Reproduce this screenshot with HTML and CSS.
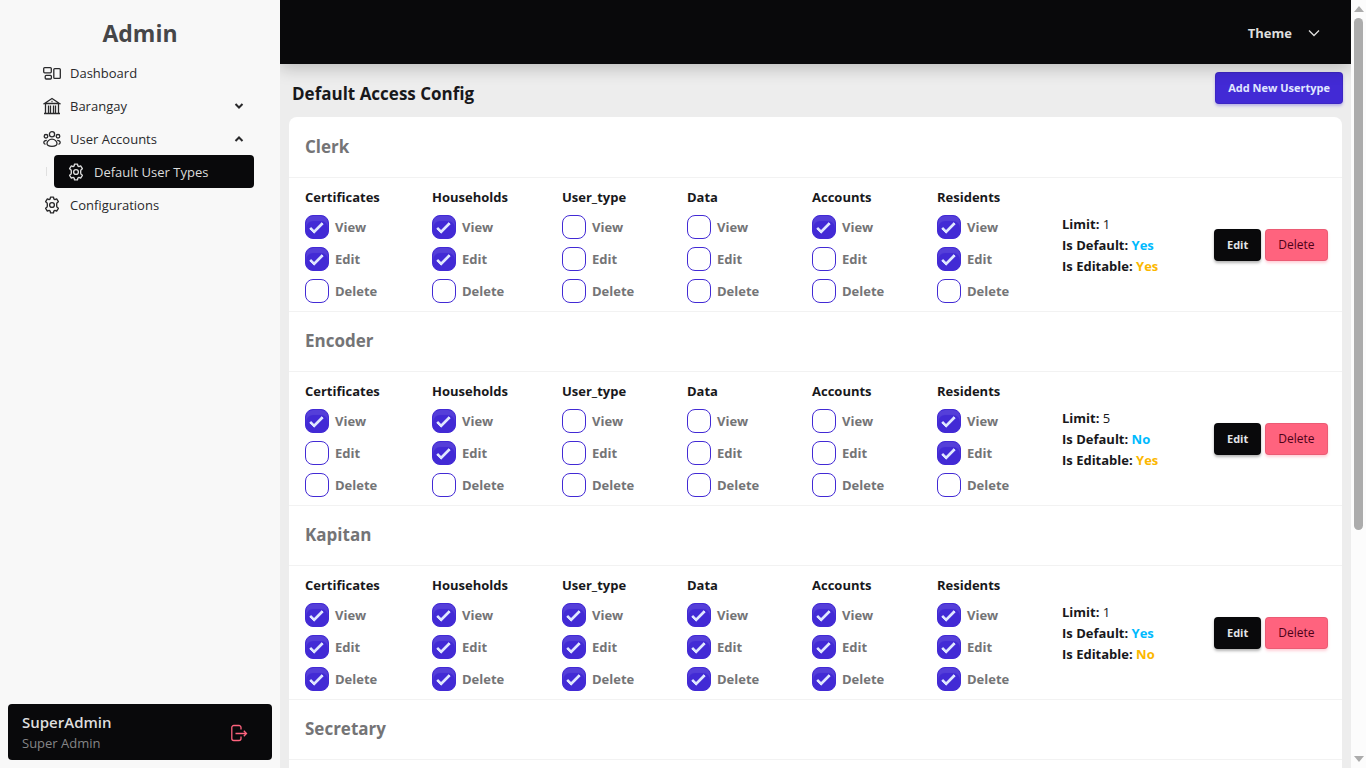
FILE: index.html
```html
<!DOCTYPE html>
<html lang="en">
<head>
<meta charset="utf-8">
<title>Default Access Config</title>
<link rel="stylesheet" href="styles.css">
</head>
<body>
<svg class="symbols" aria-hidden="true">
  <symbol id="gear" viewBox="0 0 24 24"><path d="M9.6 3.9 10 1.500h4l.4 2.400 1.500.9 2.300-.9 2.300 3.700-1.900 1.600c-.5.9-.5 4.700 0 5.600l1.900 1.600-2.300 3.700-2.300-.9-1.500.9-.4 2.400h-4l-.4-2.400-1.500-.9-2.300.9-2.300-3.700 1.900-1.600c.5-.9.5-4.700 0-5.600L3.500 7.600l2.300-3.700 2.300.9z"/><circle cx="12" cy="12" r="3.200"/></symbol>
  <symbol id="chevron" viewBox="0 0 10 10"><path d="m1.500 3 3.500 3.500L8.500 3"/></symbol>
</svg>
<div class="app">
  <aside class="sidebar">
    <h1 class="brand">Admin</h1>
    <nav class="menu">
      <a class="item" href="#"><svg class="icon" viewBox="0 0 18 18"><rect x=".7" y="3.600" width="7.600" height="5.200" rx="1"/><rect x="2.200" y="11.400" width="6.200" height="3.600" rx="1"/><rect x="10.800" y="4.600" width="6.500" height="9.800" rx="1"/></svg>Dashboard</a>
      <a class="item" href="#"><svg class="icon" viewBox="0 0 18 18"><path d="M1.500 6.500 9 1.500l7.500 5zM2.500 6.500V16M15.500 6.500V16M1 16.500h16M5.500 8.500V16M7.500 8.500V16M10.500 8.500V16M12.500 8.500V16M8.500 4.500h1"/></svg>Barangay<svg class="arrow" viewBox="0 0 10 10"><use href="#chevron"/></svg></a>
      <a class="item" href="#"><svg class="icon" viewBox="0 0 18 18"><circle cx="9" cy="4.200" r="2.600"/><circle cx="3" cy="6.300" r="1.800"/><circle cx="15" cy="6.300" r="1.800"/><path d="M9 9.200c-3 0-5 2.300-5 4.300 0 1.800 2 2.800 5 2.800s5-1 5-2.800c0-2-2-4.300-5-4.300zM3.800 10.300c-1.700 0-3 .9-3 2.300 0 .9.700 1.500 1.700 1.700M14.200 10.300c1.700 0 3 .9 3 2.300 0 .9-.7 1.500-1.700 1.700"/></svg>User Accounts<svg class="arrow up" viewBox="0 0 10 10"><use href="#chevron"/></svg></a>
      <div class="submenu">
        <a class="item active" href="#"><svg class="icon gear" viewBox="0 0 24 24"><use href="#gear"/></svg>Default User Types</a>
      </div>
      <a class="item" href="#"><svg class="icon gear" viewBox="0 0 24 24"><use href="#gear"/></svg>Configurations</a>
    </nav>
    <section class="profile">
      <div><strong class="name">SuperAdmin</strong><span class="role">Super Admin</span></div>
      <button class="logout" aria-label="Log out"><svg class="icon" viewBox="0 0 18 18"><path d="M11 5.500V3.500a2 2 0 0 0-2-2H3.800a2 2 0 0 0-2 2v11a2 2 0 0 0 2 2H9a2 2 0 0 0 2-2v-2M5.500 9.500h11M13.800 6.800l2.700 2.700-2.700 2.700"/></svg></button>
    </section>
  </aside>
  <main class="main">
    <header class="topbar">
      <button class="theme">Theme<svg class="caret" viewBox="0 0 12 12"><path d="m1 3.500 5 5 5-5"/></svg></button>
    </header>
    <div class="page">
      <div class="toolbar">
        <h2 class="title">Default Access Config</h2>
        <button class="btn primary">Add New Usertype</button>
      </div>
      <div class="card">
        <table class="access">
          <colgroup><col class="c-cert"><col class="c-house"><col class="c-mod"><col class="c-mod"><col class="c-mod"><col class="c-mod"><col class="c-info"><col class="c-act"></colgroup>
          <tbody id="rows"></tbody>
        </table>
      </div>
    </div>
  </main>
  <div class="scrollbar" aria-hidden="true">
    <svg class="tip" viewBox="0 0 10 6"><path d="M0 6h10L5 0z"/></svg>
    <div class="track"><div class="thumb"></div></div>
    <svg class="tip" viewBox="0 0 10 6"><path d="M0 0h10L5 6z"/></svg>
  </div>
</div>
<script src="app.js"></script>
</body>
</html>
```
FILE: styles.css
```css
* { box-sizing: border-box; }
body { margin: 0; font: 14px/20px "Open Sans", "Noto Sans", sans-serif; color: #18181b; background: #ededed; }
h1, h2, h3 { margin: 0; }
button { font: inherit; border: 0; cursor: pointer; }
a { color: inherit; text-decoration: none; }
svg { fill: none; stroke: currentColor; flex: none; }
.symbols { display: none; }
.app { display: grid; grid-template-columns: 280px 1fr 15px; height: 100vh; overflow: hidden; }

.sidebar { display: flex; flex-direction: column; padding: 8px; background: #f8f8f8; }
.brand { padding-top: 8px; font-size: 23px; line-height: 34px; font-weight: 700; text-align: center; color: #464648; }
.menu { display: flex; flex-direction: column; padding: 6px 18px 0 22px; }
.item { display: flex; align-items: center; gap: 9px; height: 33px; padding: 0 10px 0 13px; border-radius: 4px; font-size: 13px; color: #29292b; }
.icon { width: 18px; height: 18px; stroke-width: 1.3; }
.gear { stroke-width: 1.8; stroke-linejoin: round; }
.arrow { width: 10px; height: 10px; margin-left: auto; stroke-width: 2; }
.up { transform: rotate(180deg); }
.submenu { display: flex; align-items: center; gap: 7px; padding-left: 16px; }
.submenu::before { content: ""; width: 1px; height: 9px; background: #e0e0e0; }
.active { flex: 1; background: #09090b; color: #dcdcdc; }
.profile { display: flex; align-items: center; justify-content: space-between; height: 56px; margin-top: auto; padding: 2px 24px 0 14px; border-radius: 4px; background: #09090b; }
.name { display: block; font-size: 15px; line-height: 20px; font-weight: 600; color: #dedede; }
.role { display: block; font-size: 13px; line-height: 22px; color: #858587; }
.logout { display: flex; padding: 0; background: none; color: #ff637e; }

.main { display: flex; flex-direction: column; min-width: 0; min-height: 0; overflow: hidden; }
.topbar { display: flex; flex: none; justify-content: flex-end; align-items: center; height: 64px; padding: 2px 31px 0 0; background: #09090b; box-shadow: 0 4px 16px rgba(0, 0, 0, .22); z-index: 1; }
.theme { display: flex; align-items: center; gap: 16px; padding: 0; background: none; color: #dedede; font-size: 13px; font-weight: 700; }
.caret { width: 12px; height: 12px; stroke-width: 1.3; }
.page { flex: 1; min-height: 0; padding: 8px 8px 0 9px; overflow-y: auto; scrollbar-width: none; }
.toolbar { display: flex; align-items: center; justify-content: space-between; margin: 0 0 13px 3px; }
.title { padding-top: 12px; font-size: 17px; line-height: 20px; font-weight: 700; }
.btn { height: 32px; padding: 0 12px; border-radius: 4px; font-size: 11px; font-weight: 700; white-space: nowrap; border: 1px solid rgba(0, 0, 0, .08); box-shadow: 0 2px 3px rgba(0, 0, 0, .2); }
.primary { background: #422ad5; color: #e0e7ff; box-shadow: 0 2px 3px rgba(66, 42, 213, .3); }
.neutral { background: #09090b; color: #e4e4e7; box-shadow: 0 2px 3px rgba(0, 0, 0, .3); }
.error { background: #ff637e; color: #4d0218; font-size: 12px; font-weight: 400; box-shadow: 0 2px 3px rgba(255, 99, 126, .3); }

.card { margin-right: 1px; padding-top: 1px; background: #fff; border-radius: 8px 8px 0 0; }
.access { width: 100%; table-layout: fixed; border-collapse: separate; border-spacing: 0; }
.c-cert { width: 127px; }
.c-house { width: 130px; }
.c-mod { width: 125px; }
.c-info { width: 152px; }
.c-act { width: 144px; }
.access th { height: 60px; padding: 0 16px 2px; text-align: left; font-size: 17px; font-weight: 700; color: #747476; border-bottom: 1px solid #f2f2f2; }
.access td { padding: 8px 0 8px 16px; border-bottom: 1px solid #f2f2f2; }
.module { padding-top: 1px; font-size: 13px; line-height: 20px; font-weight: 700; }
.check { display: flex; align-items: center; gap: 6px; margin-top: 8px; font-size: 13px; line-height: 24px; font-weight: 700; color: #747476; }
.check input { appearance: none; width: 24px; height: 24px; margin: 0; padding: 4px; border: 1px solid #422ad5; border-radius: 8px; }
.check input:checked { background: #422ad5; color: #e0e7ff; box-shadow: inset 0 5px 1px rgba(255, 255, 255, .1); }
.check input:checked::before { content: ""; display: block; width: 100%; height: 100%; background: currentColor; rotate: 45deg; clip-path: polygon(20% 100%, 20% 80%, 50% 80%, 50% 0, 70% 0, 70% 100%); }
.access .info { padding-top: 9px; font-size: 13px; line-height: 21px; white-space: nowrap; }
.info b { font-weight: 700; }
.info .yes { color: #00bafe; }
.info .edit { color: #fcb700; }
.actions { display: flex; gap: 4px; }

.scrollbar { display: flex; flex-direction: column; align-items: center; padding: 6px 0; background: #fcfcfc; }
.tip { width: 10px; height: 6px; fill: #acacac; stroke: none; }
.track { flex: 1; width: 9px; padding: 6px 0; }
.thumb { height: 70%; border-radius: 5px; background: #acacac; }
```
FILE: app.js
```js
const modules = ["Certificates", "Households", "User_type", "Data", "Accounts", "Residents"];
const actions = ["View", "Edit", "Delete"];
const types = [
  { name: "Clerk", access: [2, 2, 0, 0, 1, 2], limit: 1, def: "Yes", edit: "Yes" },
  { name: "Encoder", access: [1, 2, 0, 0, 0, 2], limit: 5, def: "No", edit: "Yes" },
  { name: "Kapitan", access: [3, 3, 3, 3, 3, 3], limit: 1, def: "Yes", edit: "No" },
  { name: "Secretary", access: [3, 3, 3, 3, 3, 3], limit: 1, def: "Yes", edit: "Yes" }
];
const cell = (level, module) => `<td><div class="module">${module}</div>${actions.map((a, i) =>
  `<label class="check"><input type="checkbox"${i < level ? " checked" : ""}>${a}</label>`).join("")}</td>`;
document.getElementById("rows").innerHTML = types.map(t => `
  <tr><th colspan="8">${t.name}</th></tr>
  <tr>${t.access.map((level, i) => cell(level, modules[i])).join("")}
    <td class="info"><div><b>Limit:</b> ${t.limit}</div><div><b>Is Default: <span class="yes">${t.def}</span></b></div><div><b>Is Editable: <span class="edit">${t.edit}</span></b></div></td>
    <td><div class="actions"><button class="btn neutral">Edit</button><button class="btn error">Delete</button></div></td>
  </tr>`).join("");
```
